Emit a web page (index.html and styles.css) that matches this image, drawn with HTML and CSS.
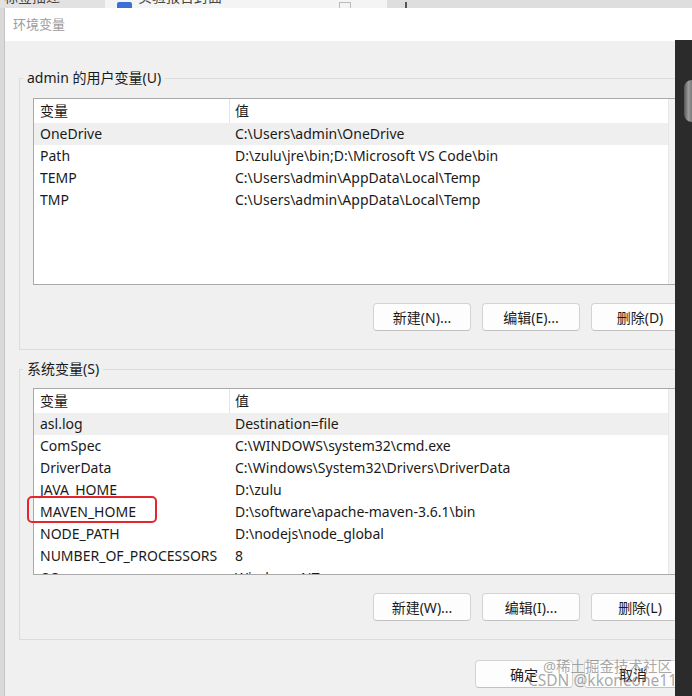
FILE: index.html
```html
<!DOCTYPE html>
<html lang="zh-CN">
<head>
  <meta charset="UTF-8">
  <meta name="viewport" content="width=device-width, initial-scale=1.0">
  <title>环境变量</title>
  <link rel="stylesheet" href="styles.css">
</head>
<body>
  <div class="behind-top">
    <div class="tab tab-a"><span class="tab-text">标签描述</span></div>
    <div class="tab tab-b">
      <span class="tab-icon"></span>
      <span class="tab-text">实验报告封面 ·</span>
      <span class="tab-box"></span>
    </div>
    <div class="tab tab-c"><span class="tab-tick"></span></div>
  </div>

  <div class="screen">
    <div class="behind-left"></div>

    <div class="dialog">
      <div class="titlebar">环境变量</div>

      <div class="dialog-body">
        <section class="group">
          <div class="group-title">admin 的用户变量(U)</div>
          <div class="listview">
            <div class="list-main">
              <div class="list-head">
                <div class="col-name">变量</div>
                <div class="col-value">值</div>
              </div>
              <div class="list-row selected">
                <div class="col-name">OneDrive</div>
                <div class="col-value">C:\Users\admin\OneDrive</div>
              </div>
              <div class="list-row">
                <div class="col-name">Path</div>
                <div class="col-value">D:\zulu\jre\bin;D:\Microsoft VS Code\bin</div>
              </div>
              <div class="list-row">
                <div class="col-name">TEMP</div>
                <div class="col-value">C:\Users\admin\AppData\Local\Temp</div>
              </div>
              <div class="list-row">
                <div class="col-name">TMP</div>
                <div class="col-value">C:\Users\admin\AppData\Local\Temp</div>
              </div>
            </div>
            <div class="scroll-track"></div>
          </div>
          <div class="btn-row">
            <button>新建(N)...</button>
            <button>编辑(E)...</button>
            <button>删除(D)</button>
          </div>
        </section>

        <section class="group second">
          <div class="group-title">系统变量(S)</div>
          <div class="listview">
            <div class="list-main">
              <div class="list-head">
                <div class="col-name">变量</div>
                <div class="col-value">值</div>
              </div>
              <div class="list-row selected">
                <div class="col-name">asl.log</div>
                <div class="col-value">Destination=file</div>
              </div>
              <div class="list-row">
                <div class="col-name">ComSpec</div>
                <div class="col-value">C:\WINDOWS\system32\cmd.exe</div>
              </div>
              <div class="list-row">
                <div class="col-name">DriverData</div>
                <div class="col-value">C:\Windows\System32\Drivers\DriverData</div>
              </div>
              <div class="list-row">
                <div class="col-name">JAVA_HOME</div>
                <div class="col-value">D:\zulu</div>
              </div>
              <div class="list-row">
                <div class="col-name">MAVEN_HOME</div>
                <div class="col-value">D:\software\apache-maven-3.6.1\bin</div>
              </div>
              <div class="list-row">
                <div class="col-name">NODE_PATH</div>
                <div class="col-value">D:\nodejs\node_global</div>
              </div>
              <div class="list-row">
                <div class="col-name">NUMBER_OF_PROCESSORS</div>
                <div class="col-value">8</div>
              </div>
              <div class="list-row">
                <div class="col-name">OS</div>
                <div class="col-value">Windows_NT</div>
              </div>
            </div>
            <div class="scroll-track"></div>
          </div>
          <div class="btn-row">
            <button>新建(W)...</button>
            <button>编辑(I)...</button>
            <button>删除(L)</button>
          </div>
        </section>

        <div class="dialog-actions">
          <button>确定</button>
          <button>取消</button>
        </div>
      </div>
    </div>
  </div>

  <!-- red annotation around MAVEN_HOME -->
  <div class="highlight"></div>

  <div class="watermark">
    <div class="wm-juejin">@稀土掘金技术社区</div>
    <div class="wm-csdn">CSDN @kkoneone11</div>
  </div>

  <div class="dark-window"><div class="knob"></div></div>
</body>
</html>
```

FILE: styles.css
```css
body {
  margin: 0;
  width: 692px;
  height: 696px;
  overflow: hidden;
  position: relative;
  background: #e4e4e4;
  font-family: "Noto Sans", "Noto Sans CJK SC", sans-serif;
  font-size: 14px;
  color: #1a1a1a;
}

/* windows peeking out behind the dialog */
.behind-top {
  display: flex;
  height: 8px;
  overflow: hidden;
}
.tab {
  display: flex;
  align-items: flex-start;
}
.tab-a {
  width: 105px;
  background: #e2e2e2;
  padding-left: 4px;
  box-sizing: border-box;
}
.tab-b {
  width: 282px;
  background: #f4f4f4;
  padding-left: 12px;
  box-sizing: border-box;
}
.tab-c {
  flex: 1;
  background: #dedede;
}
.tab-text {
  font-size: 14px;
  line-height: 18px;
  margin-top: -12px;
  color: #444;
  white-space: nowrap;
}
.tab-icon {
  width: 15px;
  height: 8px;
  margin-top: 2px;
  margin-right: 6px;
  background: #3b6fd4;
  border-radius: 2px 2px 0 0;
}
.tab-box {
  width: 10px;
  height: 5px;
  margin: 2px 0 0 110px;
  border: 1px solid #bbb;
  border-bottom: none;
}
.tab-tick {
  width: 2px;
  height: 6px;
  margin: 2px 0 0 18px;
  background: #555;
}

.screen {
  display: flex;
  height: 688px;
  overflow: hidden;
}
.behind-left {
  width: 4px;
  flex-shrink: 0;
  background: #d9d9d9;
}

.dialog {
  width: 713px;
  flex-shrink: 0;
  background: #f0f0f0;
  border-left: 1px solid #c4c4c4;
}
.titlebar {
  height: 33px;
  line-height: 33px;
  padding-left: 8px;
  background: #fff;
  font-size: 13px;
  color: #9c9c9c;
}
.dialog-body {
  padding: 37px 14px 0 14px;
}

.group {
  border: 1px solid #dcdcdc;
  padding: 0 14px 18px 13px;
}
.group.second {
  margin-top: 19px;
}
.group-title {
  width: fit-content;
  margin: -12px 0 0 -10px;
  padding: 0 4px;
  line-height: 22px;
  background: #f0f0f0;
}

.listview {
  display: flex;
  height: 187px;
  margin-top: 9px;
  border: 1px solid #a9a9a9;
  background: #fff;
  overflow: hidden;
  box-sizing: border-box;
}
.second .listview {
  margin-top: 8px;
}
.list-main {
  flex: 1;
}
.scroll-track {
  width: 19px;
  background: #f3f3f3;
  border-left: 1px solid #e6e6e6;
}
.list-head, .list-row {
  display: grid;
  grid-template-columns: 196px 1fr;
  white-space: nowrap;
}
.list-head {
  height: 24px;
  line-height: 24px;
}
.list-head .col-name {
  border-right: 1px solid #e5e5e5;
}
.list-row {
  height: 22px;
  line-height: 22px;
}
.list-row.selected {
  background: #efefef;
}
.col-name {
  padding-left: 6px;
}
.col-value {
  padding-left: 5px;
}

.btn-row, .dialog-actions {
  display: flex;
  justify-content: flex-end;
  gap: 11px;
}
.btn-row {
  margin-top: 18px;
}
.dialog-actions {
  margin-top: 20px;
  padding-right: 22px;
}
button {
  width: 98px;
  height: 28px;
  padding: 0;
  background: #fdfdfd;
  border: 1px solid #d3d3d3;
  border-bottom-color: #c2c2c2;
  border-radius: 4px;
  font-family: inherit;
  font-size: 14px;
  color: #1b1b1b;
}

.highlight {
  position: absolute;
  left: 27px;
  top: 496px;
  width: 130px;
  height: 27px;
  border: 2px solid #e5272d;
  border-radius: 5px;
  box-sizing: border-box;
}

.watermark {
  position: absolute;
  left: 528px;
  top: 657px;
  color: rgba(110, 110, 110, 0.6);
  white-space: nowrap;
}
.wm-juejin {
  margin-left: 15px;
  font-size: 14.5px;
  line-height: 18px;
}
.wm-csdn {
  margin-top: -4px;
  font-size: 15.5px;
  line-height: 18px;
}

.dark-window {
  position: absolute;
  left: 675px;
  top: 40px;
  right: 0;
  bottom: 0;
  background: #2b2b2b;
}
.knob {
  margin: 40px 0 0 9px;
  height: 42px;
  border-radius: 8px 0 0 8px;
  background: linear-gradient(90deg, #555 0%, #9c9c9c 55%, #7a7a7a 100%);
}
```
